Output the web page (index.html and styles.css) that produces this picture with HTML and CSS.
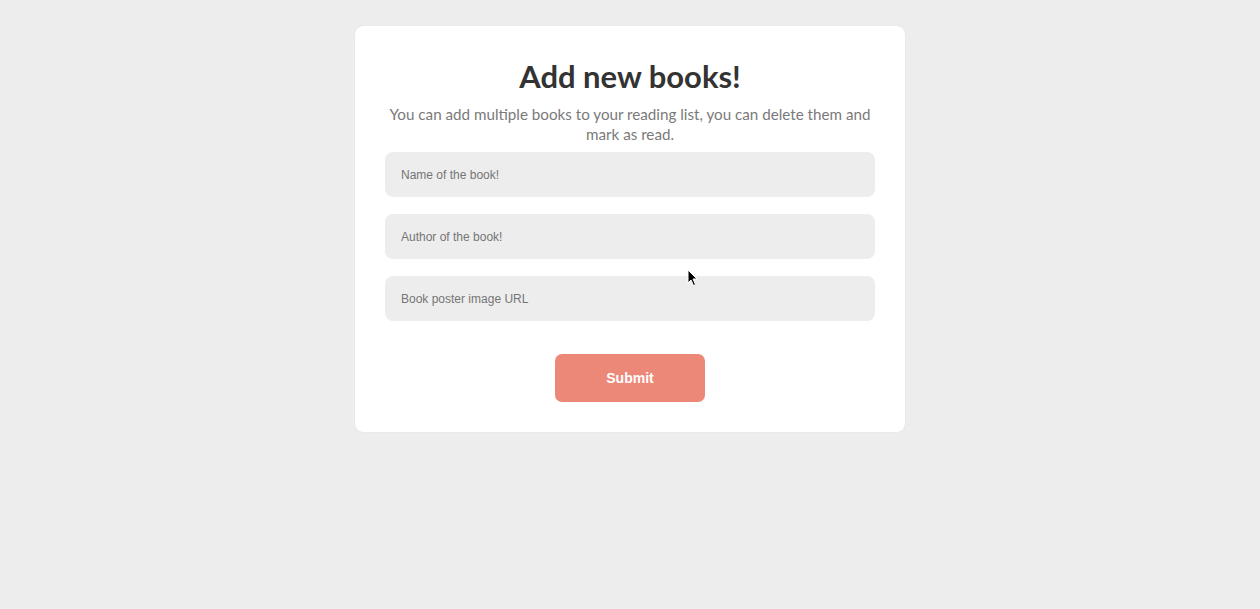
FILE: index.html
```html
<!DOCTYPE html>
<html>
<head>
<meta charset="utf-8">
<link rel="stylesheet" href="styles.css">
</head>
<body>
<main class="card">
  <h1 class="title">Add new books!</h1>
  <p class="subtitle">You can add multiple books to your reading list, you can delete them and mark as read.</p>
  <form class="form">
    <input class="field" type="text" placeholder="Name of the book!">
    <input class="field" type="text" placeholder="Author of the book!">
    <input class="field" type="text" placeholder="Book poster image URL">
    <button class="submit" type="button">Submit</button>
  </form>
</main>
<svg class="cursor" width="12" height="18" viewBox="0 0 12 18"><path d="M1 1 L1 14 L4 11 L6.5 16.5 L8.5 15.5 L6 10 L10 10 Z" fill="#000" stroke="#fff" stroke-width="1"/></svg>
</body>
</html>
```
FILE: styles.css
```css
html, body {
  margin: 0;
  padding: 0;
}
body {
  background: #ededed;
  min-height: 609px;
  position: relative;
  font-family: "Source Sans Pro", "Lato", "Open Sans", sans-serif;
}
.card {
  width: 550px;
  box-sizing: border-box;
  margin: 26px auto 0;
  background: #fff;
  border-radius: 8px;
  padding: 28px 30px 30px;
  box-shadow: 0 0 1px rgba(0,0,0,0.15);
}
.title {
  margin: 0;
  text-align: center;
  font-size: 31px;
  line-height: 44px;
  font-weight: 700;
  color: #333;
}
.subtitle {
  margin: 6px 0 8px;
  text-align: center;
  font-size: 15.2px;
  line-height: 20px;
  color: #7a7a7a;
}
.form {
  display: flex;
  flex-direction: column;
  align-items: center;
  gap: 17px;
}
.field {
  width: 100%;
  height: 45px;
  box-sizing: border-box;
  border: none;
  border-radius: 8px;
  background: #ededed;
  padding: 0 16px;
  font-family: "Liberation Sans", Arial, sans-serif;
  font-size: 12px;
  color: #555;
  outline: none;
}
.field::placeholder {
  color: #757575;
}
.submit {
  margin-top: 16px;
  width: 150px;
  height: 48px;
  border: none;
  border-radius: 7px;
  background: #eb8878;
  color: #fff;
  font-family: "Liberation Sans", Arial, sans-serif;
  font-weight: 700;
  font-size: 14px;
}
.cursor {
  position: absolute;
  left: 687px;
  top: 269px;
}
```
